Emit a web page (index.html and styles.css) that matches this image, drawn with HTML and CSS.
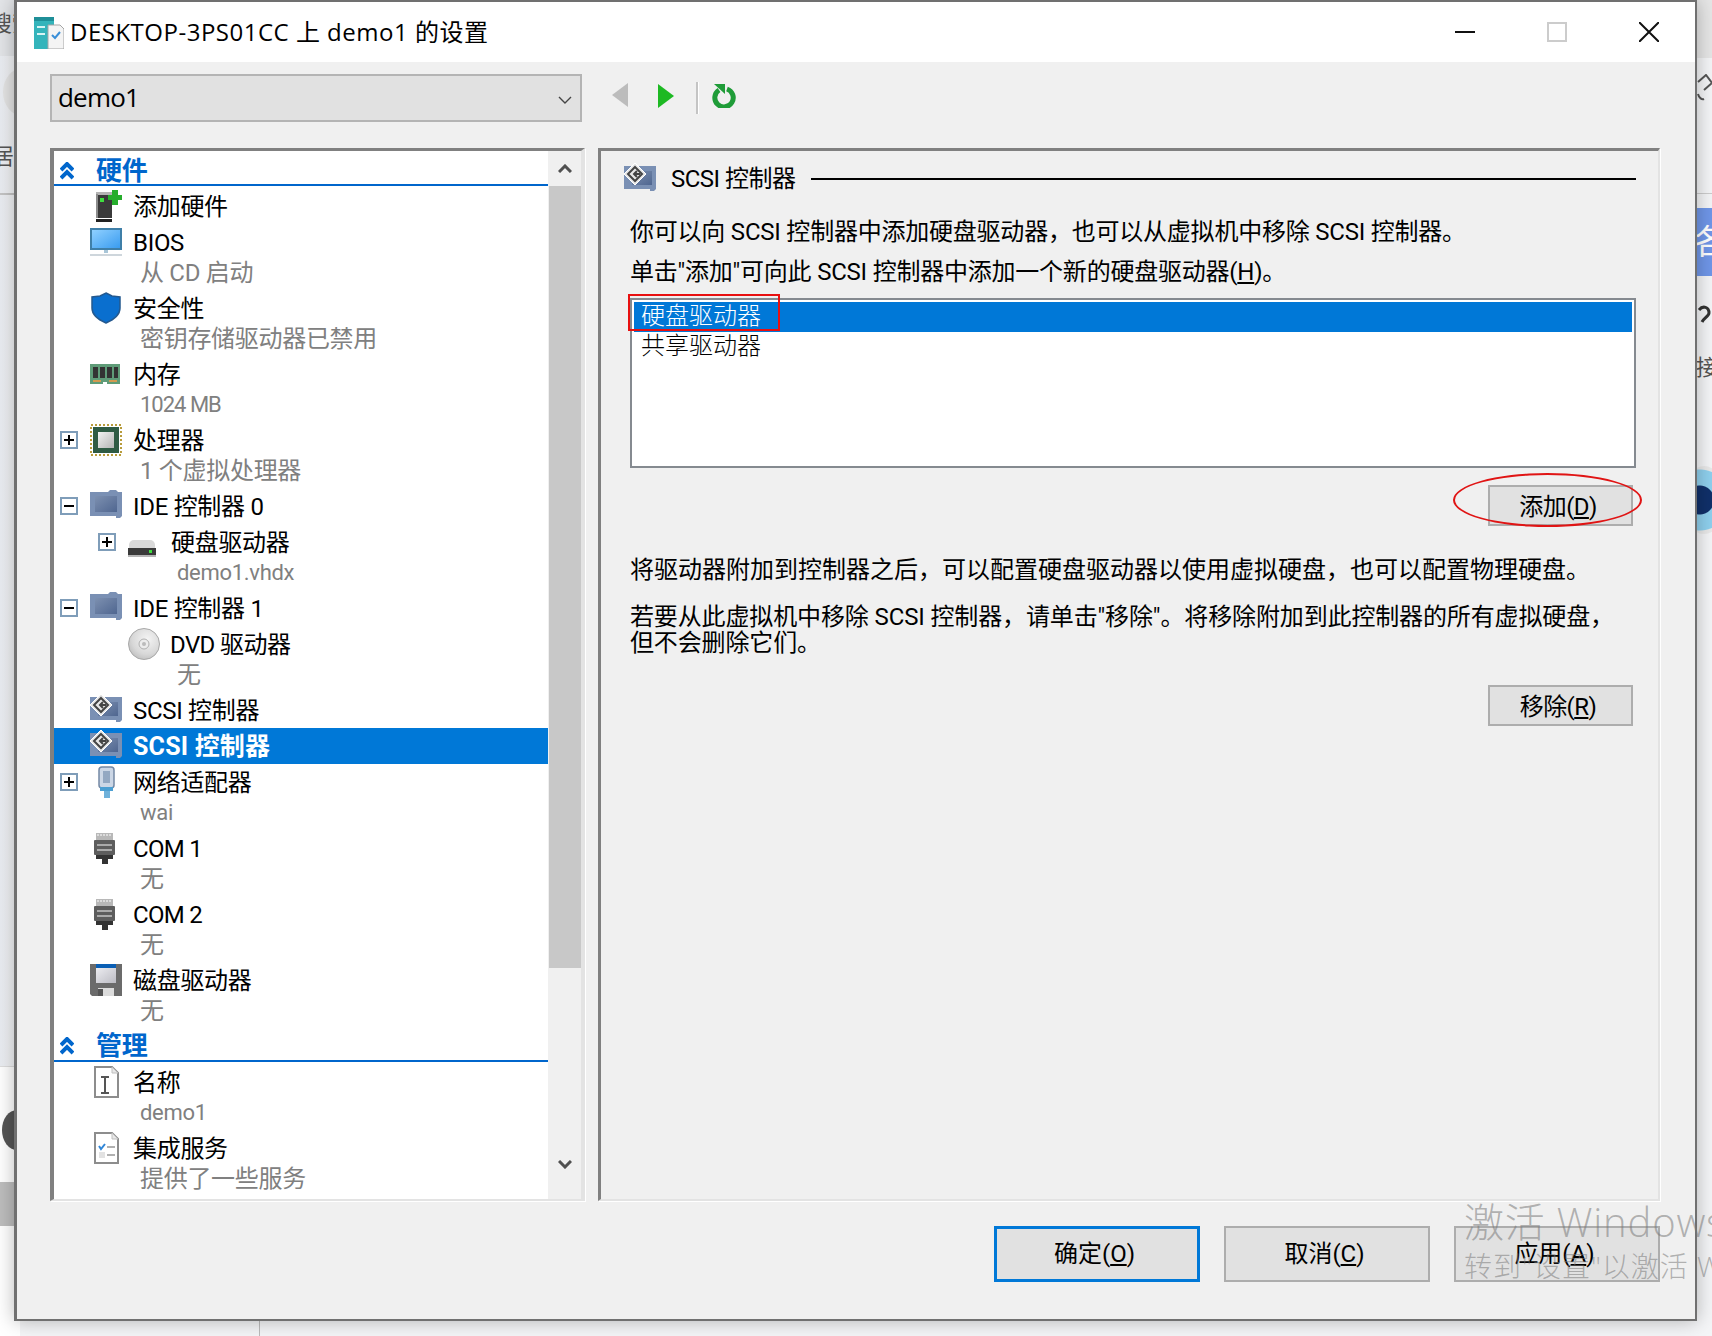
FILE: index.html
```html
<!DOCTYPE html>
<html lang="zh-CN">
<head>
<meta charset="utf-8">
<title>DESKTOP-3PS01CC 上 demo1 的设置</title>
<link rel="stylesheet" href="styles.css">
</head>
<body>
<svg class="defs" aria-hidden="true">
  <defs>
    <linearGradient id="g-screen" x1="0" y1="0" x2="1" y2="1"><stop offset="0" stop-color="#8fd0ff"/><stop offset="1" stop-color="#3a9cf0"/></linearGradient>
    <linearGradient id="g-chip" x1="0" y1="0" x2="1" y2="1"><stop offset="0" stop-color="#f2f2f2"/><stop offset="1" stop-color="#b5b5b5"/></linearGradient>
    <linearGradient id="g-board" x1="0" y1="0" x2="1" y2="1"><stop offset="0" stop-color="#7d90b0"/><stop offset="1" stop-color="#4f6690"/></linearGradient>
    <radialGradient id="g-disc" cx=".6" cy=".35" r=".8"><stop offset="0" stop-color="#f4f4f4"/><stop offset=".6" stop-color="#d8d8d8"/><stop offset="1" stop-color="#b4b4b4"/></radialGradient>
    <linearGradient id="g-label" x1="0" y1="0" x2="1" y2="1"><stop offset="0" stop-color="#ececf0"/><stop offset="1" stop-color="#bcbcc4"/></linearGradient>
    <symbol id="i-add" viewBox="0 0 32 32">
      <rect x="6" y="3" width="16" height="25" fill="#3a3a3a"/><rect x="6" y="2" width="16" height="3" fill="#b4b4b4"/><rect x="6" y="4" width="2" height="24" fill="#8c8c8c"/>
      <rect x="10" y="8" width="4" height="4" fill="#3fe03f"/><rect x="6" y="29" width="16" height="3" fill="#222"/>
      <path d="M22 0h6v5h4v5h-4v5h-6v-5h-4v-5h4z" fill="#26ad2c"/>
    </symbol>
    <symbol id="i-bios" viewBox="0 0 32 32">
      <rect y="2" width="32" height="22" fill="#3f7fa8"/><rect x="2" y="4" width="28" height="18" fill="url(#g-screen)"/>
      <rect x="14" y="24" width="4" height="3" fill="#a9c6d8"/><rect y="28" width="32" height="2" fill="#ced6dc"/>
    </symbol>
    <symbol id="i-shield" viewBox="0 0 32 32">
      <path d="M16 1l6 3 8 1v11c0 7-7 12-14 15C9 28 2 23 2 16V5l8-1z" fill="#0a6fcf" stroke="#24598f" stroke-width="1.5"/>
    </symbol>
    <symbol id="i-mem" viewBox="0 0 32 32">
      <rect y="6" width="30" height="20" fill="#5f9c78"/><rect x="3" y="9" width="5" height="11" fill="#333"/><rect x="10" y="9" width="5" height="11" fill="#333"/><rect x="17" y="9" width="5" height="11" fill="#333"/><rect x="24" y="9" width="4" height="11" fill="#333"/>
      <rect x="3" y="22" width="8" height="2" fill="#d39a50"/><rect x="19" y="22" width="8" height="2" fill="#d39a50"/><rect x="13" y="24" width="4" height="2" fill="#fff"/>
    </symbol>
    <symbol id="i-cpu" viewBox="0 0 32 32">
      <rect x="1" y="1" width="30" height="30" fill="none" stroke="#b89c3c" stroke-width="2" stroke-dasharray="2 2"/>
      <rect x="3" y="3" width="26" height="26" fill="#2f5b44"/><rect x="8" y="8" width="16" height="16" fill="url(#g-chip)"/>
    </symbol>
    <symbol id="i-ide" viewBox="0 0 32 32">
      <path d="M0 2h18l2-2h6l2 2h4v24l-2 2h-4v-2H0z" fill="#7a90b4"/><rect x="5" y="6" width="22" height="16" fill="url(#g-board)"/>
    </symbol>
    <symbol id="i-hdd" viewBox="0 0 28 32">
      <rect x="1" y="14" width="26" height="14" rx="5" fill="#d9d9d9"/><rect y="22" width="28" height="7" fill="#3a3a3a"/><rect x="21" y="24" width="3" height="3" fill="#3ee03e"/><rect y="29" width="28" height="2" fill="#b5b5b5"/>
    </symbol>
    <symbol id="i-dvd" viewBox="0 0 32 32">
      <circle cx="16" cy="16" r="15.5" fill="url(#g-disc)" stroke="#a8a8a8"/><circle cx="16" cy="16" r="5" fill="#ececec" stroke="#b0b0b0"/><circle cx="16" cy="16" r="2" fill="#bbb"/>
    </symbol>
    <symbol id="i-scsi" viewBox="0 0 32 32">
      <path d="M0 3h32v23l-2 2h-4v-2H0z" fill="#7a90b4"/><rect x="8" y="8" width="20" height="14" fill="url(#g-board)"/>
      <path d="M11 0l11 11-11 11L0 11z" fill="#e8e8e8" stroke="#fff"/><path d="M11 4l7 7-7 7-7-7z" fill="none" stroke="#444" stroke-width="2"/><path d="M16 11h-6m3-3l-3 3 3 3" fill="none" stroke="#444" stroke-width="2"/>
    </symbol>
    <symbol id="i-net" viewBox="-1 0 32 32">
      <rect x="8" y="1" width="15" height="21" rx="3" fill="#ccd7e6" stroke="#7489a5" stroke-width="1.5"/><rect x="12" y="5" width="7" height="12" fill="#93a8c2"/>
      <rect x="9" y="21" width="13" height="4" fill="#4c9fd2"/><rect x="13" y="25" width="6" height="7" fill="#6fb1da"/>
    </symbol>
    <symbol id="i-com" viewBox="0 0 32 32">
      <rect x="6" y="1" width="17" height="7" fill="#b8b8b8"/><path d="M8 2v2m3-2v2m3-2v2m3-2v2m3-2v2" stroke="#fff"/>
      <rect x="4" y="8" width="21" height="15" rx="1" fill="#5d5d5d"/><rect x="7" y="12" width="15" height="2" fill="#aaa"/><rect x="7" y="17" width="15" height="2" fill="#aaa"/>
      <rect x="6" y="23" width="17" height="4" fill="#333"/><rect x="12" y="27" width="6" height="5" fill="#333"/>
    </symbol>
    <symbol id="i-floppy" viewBox="0 0 32 32">
      <path d="M0 0h32v32H2l-2-2z" fill="#6b6b6b"/><rect x="6" width="20" height="4" fill="#0a5fb5"/><rect x="6" y="4" width="20" height="15" fill="url(#g-label)"/>
      <rect x="8" y="24" width="16" height="8" fill="#dcdcdc"/><rect x="8" y="25" width="5" height="7" fill="#555"/>
    </symbol>
    <symbol id="i-name" viewBox="-4 0 32 32">
      <path d="M1 1h17l6 6v24H1z" fill="#fff" stroke="#8d8d8d" stroke-width="2"/><path d="M18 1v6h6" fill="#e8e8e8" stroke="#c0c0c0"/>
      <path d="M7 11h8M7 27h8M11 11v16" fill="none" stroke="#555" stroke-width="2"/>
    </symbol>
    <symbol id="i-int" viewBox="-4 0 32 32">
      <path d="M1 1h17l6 6v24H1z" fill="#fff" stroke="#8d8d8d" stroke-width="2"/><path d="M18 1v6h6" fill="#e8e8e8" stroke="#c0c0c0"/>
      <path d="M5 14l2 3 4-5" fill="none" stroke="#2f86d8" stroke-width="2"/><rect x="5" y="20" width="6" height="6" fill="#e2e2e2"/><path d="M13 15h8M13 23h8" stroke="#b0b0b0" stroke-width="2"/>
    </symbol>
  </defs>
</svg>

<div class="desk">
  <div class="d-top-l"></div>
  <div class="d-circle"></div>
  <div class="d-snip d-s1">搜索</div>
  <div class="d-snip d-s2">居</div>
  <div class="d-band-l"></div>
  <div class="d-white-l"></div>
  <div class="d-dark"></div>
  <div class="d-bar-l"></div>
  <div class="d-top-r"></div>
  <div class="d-line-r"></div>
  <svg class="d-diamond" viewBox="0 0 15 30"><path d="M1 8l8-7 6 8-8 7M1 20c1 4 4 6 6 5" fill="none" stroke="#555" stroke-width="2"/></svg>
  <div class="d-blue"><span>各</span></div>
  <svg class="d-hook" viewBox="0 0 15 24"><path d="M2 6c4-5 10-3 10 3 0 3-5 5-7 9" fill="none" stroke="#333" stroke-width="3"/></svg>
  <div class="d-snip d-s3">接</div>
  <div class="d-eye"></div>
  <div class="d-vline"></div>
</div>

<main class="window">
  <header class="titlebar">
    <svg class="appicon" viewBox="0 0 30 32"><rect width="20" height="32" fill="#34b4bb"/><rect width="20" height="4" fill="#1f8f98"/><path d="M3 10h8M3 17h8" stroke="#d8f4f4" stroke-width="2"/><path d="M14 8h12l4 4v20H14z" fill="#f4f4f4" stroke="#a5a5a5"/><path d="M18 18l3 3 5-6" fill="none" stroke="#3a8fd8" stroke-width="2"/></svg>
    <h1 class="title">DESKTOP-3PS01CC 上 demo1 的设置</h1>
    <div class="caption">
      <svg class="cap" viewBox="0 0 20 20"><path d="M0 10h20" stroke="#111" stroke-width="2"/></svg>
      <svg class="cap" viewBox="0 0 20 20"><rect x="1" y="1" width="18" height="18" fill="none" stroke="#ccc" stroke-width="2"/></svg>
      <svg class="cap" viewBox="0 0 20 20"><path d="M0 0l20 20M20 0L0 20" stroke="#111" stroke-width="2"/></svg>
    </div>
  </header>

  <div class="toolbar">
    <div class="combo"><span>demo1</span><svg class="combo-chev" viewBox="0 0 14 8"><path d="M1 1l6 6 6-6" fill="none" stroke="#444" stroke-width="1.4"/></svg></div>
    <svg class="tool back" viewBox="0 0 16 24"><path d="M16 0v24L0 12z" fill="#bcbcbc"/></svg>
    <svg class="tool fwd" viewBox="0 0 16 24"><path d="M0 0v24l16-12z" fill="#1db923"/></svg>
    <span class="tool-sep"></span>
    <svg class="tool refresh" viewBox="0 0 24 24"><path d="M15 5a9.2 9.2 0 1 1-8 1" fill="none" stroke="#1f9c38" stroke-width="5"/><path d="M2 0h11v10z" fill="#1f9c38"/></svg>
  </div>

  <div class="panes">
    <nav class="tree-pane">
      <div class="tree">
        <div class="section"><svg class="sec-ic" viewBox="0 0 14 18"><path d="M1 8l6-6 6 6M1 16l6-6 6 6" fill="none" stroke="#0066cc" stroke-width="4"/></svg><span>硬件</span></div>
        <div class="gap2"></div>
        <div class="row"><svg class="ic"><use href="#i-add"/></svg><span>添加硬件</span></div>
        <div class="row"><svg class="ic"><use href="#i-bios"/></svg><span>BIOS</span></div>
        <div class="sub">从 CD 启动</div>
        <div class="row"><svg class="ic"><use href="#i-shield"/></svg><span>安全性</span></div>
        <div class="sub">密钥存储驱动器已禁用</div>
        <div class="row"><svg class="ic"><use href="#i-mem"/></svg><span>内存</span></div>
        <div class="sub latin tight">1024 MB</div>
        <div class="row has-exp"><i class="exp plus"></i><svg class="ic"><use href="#i-cpu"/></svg><span>处理器</span></div>
        <div class="sub">1 个虚拟处理器</div>
        <div class="row has-exp"><i class="exp"></i><svg class="ic"><use href="#i-ide"/></svg><span>IDE 控制器 0</span></div>
        <div class="row nested has-exp"><i class="exp plus"></i><svg class="ic"><use href="#i-hdd"/></svg><span>硬盘驱动器</span></div>
        <div class="sub nested latin">demo1.vhdx</div>
        <div class="row has-exp"><i class="exp"></i><svg class="ic"><use href="#i-ide"/></svg><span>IDE 控制器 1</span></div>
        <div class="row child"><svg class="ic"><use href="#i-dvd"/></svg><span>DVD 驱动器</span></div>
        <div class="sub nested">无</div>
        <div class="row"><svg class="ic"><use href="#i-scsi"/></svg><span>SCSI 控制器</span></div>
        <div class="row selected"><svg class="ic"><use href="#i-scsi"/></svg><span>SCSI 控制器</span></div>
        <div class="row has-exp"><i class="exp plus"></i><svg class="ic"><use href="#i-net"/></svg><span>网络适配器</span></div>
        <div class="sub latin">wai</div>
        <div class="row"><svg class="ic"><use href="#i-com"/></svg><span class="com">COM 1</span></div>
        <div class="sub">无</div>
        <div class="row"><svg class="ic"><use href="#i-com"/></svg><span class="com">COM 2</span></div>
        <div class="sub">无</div>
        <div class="row"><svg class="ic"><use href="#i-floppy"/></svg><span>磁盘驱动器</span></div>
        <div class="sub">无</div>
        <div class="section section-2"><svg class="sec-ic" viewBox="0 0 14 18"><path d="M1 8l6-6 6 6M1 16l6-6 6 6" fill="none" stroke="#0066cc" stroke-width="4"/></svg><span>管理</span></div>
        <div class="gap2"></div>
        <div class="row"><svg class="ic"><use href="#i-name"/></svg><span>名称</span></div>
        <div class="sub latin">demo1</div>
        <div class="row"><svg class="ic"><use href="#i-int"/></svg><span>集成服务</span></div>
        <div class="sub">提供了一些服务</div>
      </div>
      <div class="vscroll">
        <svg class="arrow" viewBox="0 0 14 9"><path d="M1 8l6-6 6 6" fill="none" stroke="#505050" stroke-width="3"/></svg>
        <div class="thumb"></div>
        <svg class="arrow" viewBox="0 0 14 9"><path d="M1 1l6 6 6-6" fill="none" stroke="#505050" stroke-width="3"/></svg>
      </div>
    </nav>

    <section class="detail">
      <div class="detail-head"><svg class="ic"><use href="#i-scsi"/></svg><span>SCSI 控制器</span><hr class="head-line"></div>
      <p class="line tall">你可以向 SCSI 控制器中添加硬盘驱动器，也可以从虚拟机中移除 SCSI 控制器。</p>
      <p class="line tall">单击"添加"可向此 SCSI 控制器中添加一个新的硬盘驱动器(<u>H</u>)。</p>
      <div class="listbox">
        <div class="opt opt-sel">硬盘驱动器</div>
        <div class="opt">共享驱动器</div>
      </div>
      <div class="btn-row add-row"><button class="btn">添加(<u>D</u>)</button></div>
      <p class="line tall para3">将驱动器附加到控制器之后，可以配置硬盘驱动器以使用虚拟硬盘，也可以配置物理硬盘。</p>
      <p class="line para4">若要从此虚拟机中移除 SCSI 控制器，请单击"移除"。将移除附加到此控制器的所有虚拟硬盘，<br>但不会删除它们。</p>
      <div class="btn-row rem-row"><button class="btn">移除(<u>R</u>)</button></div>
    </section>
  </div>

  <footer class="footer">
    <button class="btn dlg default">确定(<u>O</u>)</button>
    <button class="btn dlg">取消(<u>C</u>)</button>
    <button class="btn dlg">应用(<u>A</u>)</button>
  </footer>
</main>

<div class="mark-rect"></div>
<div class="mark-ellipse"></div>
<div class="watermark"><div class="wm1">激活 Windows</div><div class="wm2">转到"设置"以激活 Windows。</div></div>
</body>
</html>
```
FILE: styles.css
```css
* { box-sizing: border-box; }
html, body { margin: 0; padding: 0; width: 1712px; height: 1336px; overflow: hidden; }
body {
  position: relative;
  background: #fff;
  font-family: Roboto, "Noto Sans CJK SC", sans-serif;
  color: #000;
}
.defs { position: absolute; width: 0; height: 0; }

/* desktop fragments behind the dialog */
.desk { position: absolute; inset: 0; background: linear-gradient(90deg, #e9ecf1, #f4f5f7 14px); }
.desk > div, .desk > svg { position: absolute; }
.d-top-l { left: 0; top: 0; width: 20px; height: 56px; background: #e3e5e8; }
.d-circle { left: 3px; top: 68px; width: 40px; height: 48px; border-radius: 50%; background: #e4e4e4; }
.d-snip { font-size: 22px; color: #555; line-height: 24px; }
.d-s1 { left: -10px; top: 12px; white-space: nowrap; }
.d-s2 { left: -8px; top: 145px; }
.d-band-l { left: 0; top: 193px; width: 20px; height: 2px; background: #c4c4c4; }
.d-white-l { left: 0; top: 1066px; width: 20px; height: 270px; background: #fff; border-top: 1px solid #ddd; }
.d-dark { left: 2px; top: 1110px; width: 30px; height: 40px; border-radius: 50%; background: #555; }
.d-bar-l { left: 0; top: 1182px; width: 20px; height: 44px; background: #bdbdbd; }
.d-top-r { left: 1690px; top: 0; width: 22px; height: 58px; background: #e6e6e6; }
.d-line-r { left: 1690px; top: 193px; width: 22px; height: 1px; background: #ccc; }
.d-diamond { left: 1697px; top: 74px; width: 15px; height: 30px; }
.d-blue { left: 1690px; top: 208px; width: 22px; height: 68px; background: #6f96e8; color: #fff; font-size: 34px; line-height: 68px; overflow: hidden; }
.d-blue span { margin-left: 4px; }
.d-hook { left: 1697px; top: 304px; width: 15px; height: 24px; }
.d-s3 { left: 1696px; top: 356px; }
.d-eye { left: 1682px; top: 466px; width: 44px; height: 68px; border-radius: 50%; background: radial-gradient(circle at 40% 50%, #10306a 0 14px, #8fd0ee 15px 30px, #e9e9e9 31px); }
.d-vline { left: 259px; top: 1321px; width: 1px; height: 15px; background: #bbb; }

/* dialog */
.window {
  position: absolute;
  left: 14px; top: 0;
  width: 1683px; height: 1321px;
  display: flex; flex-direction: column;
  background: #f0f0f0;
  border: 2px solid #707070;
  border-left-width: 3px;
  box-shadow: 0 0 18px rgba(0, 0, 0, .28);
}
.titlebar { height: 60px; flex: none; background: #fff; display: flex; align-items: center; padding-left: 17px; }
.appicon { width: 30px; height: 32px; flex: none; margin-top: 1px; }
.title { margin: -4px 0 0 6px; font: 400 24px "Open Sans", "Noto Sans CJK SC", sans-serif; letter-spacing: .5px; white-space: nowrap; }
.caption { margin-left: auto; margin-right: 36px; display: flex; gap: 72px; }
.cap { width: 20px; height: 20px; display: block; }

.toolbar { height: 86px; flex: none; padding: 12px 0 0 33px; display: flex; align-items: flex-start; }
.combo {
  width: 532px; height: 48px; flex: none;
  background: #e1e1e1; border: 2px solid #b4b4b4;
  display: flex; align-items: center; justify-content: space-between;
  padding: 0 8px 0 6px;
  font: 400 26px "Open Sans", sans-serif; letter-spacing: -.8px;
}
.combo span { margin-top: -2px; }
.combo-chev { width: 14px; height: 8px; margin-top: 3px; }
.tool { flex: none; display: block; }
.back { width: 16px; height: 24px; margin: 9px 0 0 30px; }
.fwd { width: 16px; height: 24px; margin: 10px 0 0 30px; }
.tool-sep { width: 2px; height: 32px; margin: 8px 0 0 22px; background: #c4c4c4; box-shadow: 1px 0 0 #fff; }
.refresh { width: 24px; height: 24px; margin: 10px 0 0 14px; }

.panes { flex: none; height: 1053px; padding-left: 33px; display: flex; gap: 13px; }
.tree-pane, .detail {
  border-style: solid;
  border-width: 3px 2px 2px 3px;
  border-color: #808080 #e3e3e3 #e3e3e3 #808080;
  box-shadow: 1px 1px 0 #fff;
}
.tree-pane { width: 535px; height: 100%; display: flex; overflow: hidden; background: #f0f0f0; border-left-width: 4px; border-right-width: 4px; }
.tree { width: 494px; flex: none; background: #fff; overflow: hidden; font-size: 24px; letter-spacing: -.3px; white-space: nowrap; }
.section {
  height: 35px; border-bottom: 2px solid #0066cc;
  color: #0066cc; font-weight: 700; font-size: 26px; line-height: 34px;
  display: flex; align-items: center; padding: 6px 0 0 6px;
}
.section-2 { height: 34px; padding-top: 4px; }
.sec-ic { width: 14px; height: 18px; margin-right: 22px; flex: none; }
.gap2 { height: 2px; }
.row { height: 36px; display: flex; align-items: center; padding-left: 36px; }
.row span { margin: 2px 0 0 11px; line-height: 36px; }
.row .com { letter-spacing: -.7px; }
.ic { width: 32px; height: 32px; flex: none; }
.has-exp { padding-left: 6px; }
.exp { width: 18px; height: 18px; margin-right: 12px; flex: none; border: 2px solid #7f9db9; position: relative; background: #fff; }
.exp::before { content: ""; position: absolute; left: 2px; right: 2px; top: 6px; height: 2px; background: #000; }
.exp.plus::after { content: ""; position: absolute; top: 2px; bottom: 2px; left: 6px; width: 2px; background: #000; }
.row.nested { padding-left: 44px; }
.row.child { padding-left: 74px; }
.row.nested .ic { width: 28px; }
.row.nested span { margin-left: 15px; }
.row.child span { margin-left: 10px; letter-spacing: -.6px; }
.sub { height: 30px; line-height: 26px; padding-left: 86px; color: #808080; }
.sub.nested { padding-left: 123px; }
.sub.latin { font-size: 22px; line-height: 26px; }
.sub.tight { letter-spacing: -1px; }
.selected { background: #0078d7; color: #fff; font-weight: 700; font-size: 25px; letter-spacing: .2px; }

.vscroll { width: 32px; margin-left: 1px; flex: none; display: flex; flex-direction: column; align-items: center; }
.arrow { width: 14px; height: 9px; flex: none; margin: 13px 0 13px; }
.thumb { flex: none; width: 32px; height: 782px; background: #c8c8c8; margin-bottom: 192px; }
.vscroll .arrow:last-child { margin-top: 0; }

.detail { flex: 1; max-width: 1062px; height: 100%; padding: 9px 22px 0 29px; font-size: 24px; white-space: nowrap; overflow: hidden; }
.detail-head { height: 36px; display: flex; align-items: center; margin: 1px 0 0 -6px; letter-spacing: -.5px; }
.detail-head span { margin: 0 0 6px 15px; }
.head-line { flex: 1; height: 2px; margin: 0 0 0 15px; border: 0; background: #000; }
.line { margin: 0; letter-spacing: -.22px; line-height: 26px; }
.tall { line-height: 40px; }
.detail-head + .tall { margin-top: 15px; }
.listbox { margin-top: 6px; height: 170px; background: #fff; border: 2px solid #858a90; padding: 2px; font-weight: 300; }
.opt { height: 30px; line-height: 28px; padding-left: 7px; }
.opt-sel { background: #0078d7; color: #fff; }
.btn-row { display: flex; justify-content: flex-end; padding-right: 3px; }
.add-row { margin-top: 17px; }
.rem-row { margin-top: 29px; }
.para3 { margin-top: 24px; letter-spacing: 0; }
.para4 { margin-top: 14px; letter-spacing: -.13px; }
.btn {
  width: 145px; height: 41px; padding: 0 5px 4px 0;
  background: #e1e1e1; border: 2px solid #adadad; border-radius: 0;
  font: 400 24px Roboto, "Noto Sans CJK SC", sans-serif; letter-spacing: -.6px; color: #000;
}
.footer { flex: 1; display: flex; justify-content: flex-end; gap: 24px; padding: 25px 35px 0 0; }
.dlg { width: 206px; height: 56px; padding: 0 5px 6px 0; letter-spacing: 0; }
.default { border: 3px solid #0078d7; }

/* annotations over the screenshot */
.mark-rect { position: absolute; left: 628px; top: 294px; width: 152px; height: 37px; border: 2px solid #e81010; }
.mark-ellipse { position: absolute; left: 1453px; top: 473px; width: 189px; height: 54px; border: 2px solid #e01414; border-radius: 50%; }
.watermark { position: absolute; left: 1464px; top: 1195px; color: rgba(120, 120, 120, .55); white-space: nowrap; pointer-events: none; font-family: "Open Sans", "Noto Sans CJK SC", sans-serif; font-weight: 300; }
.wm1 { font-size: 40px; line-height: 54px; letter-spacing: .8px; }
.wm2 { font-size: 28px; line-height: 34px; letter-spacing: 1px; }
```
